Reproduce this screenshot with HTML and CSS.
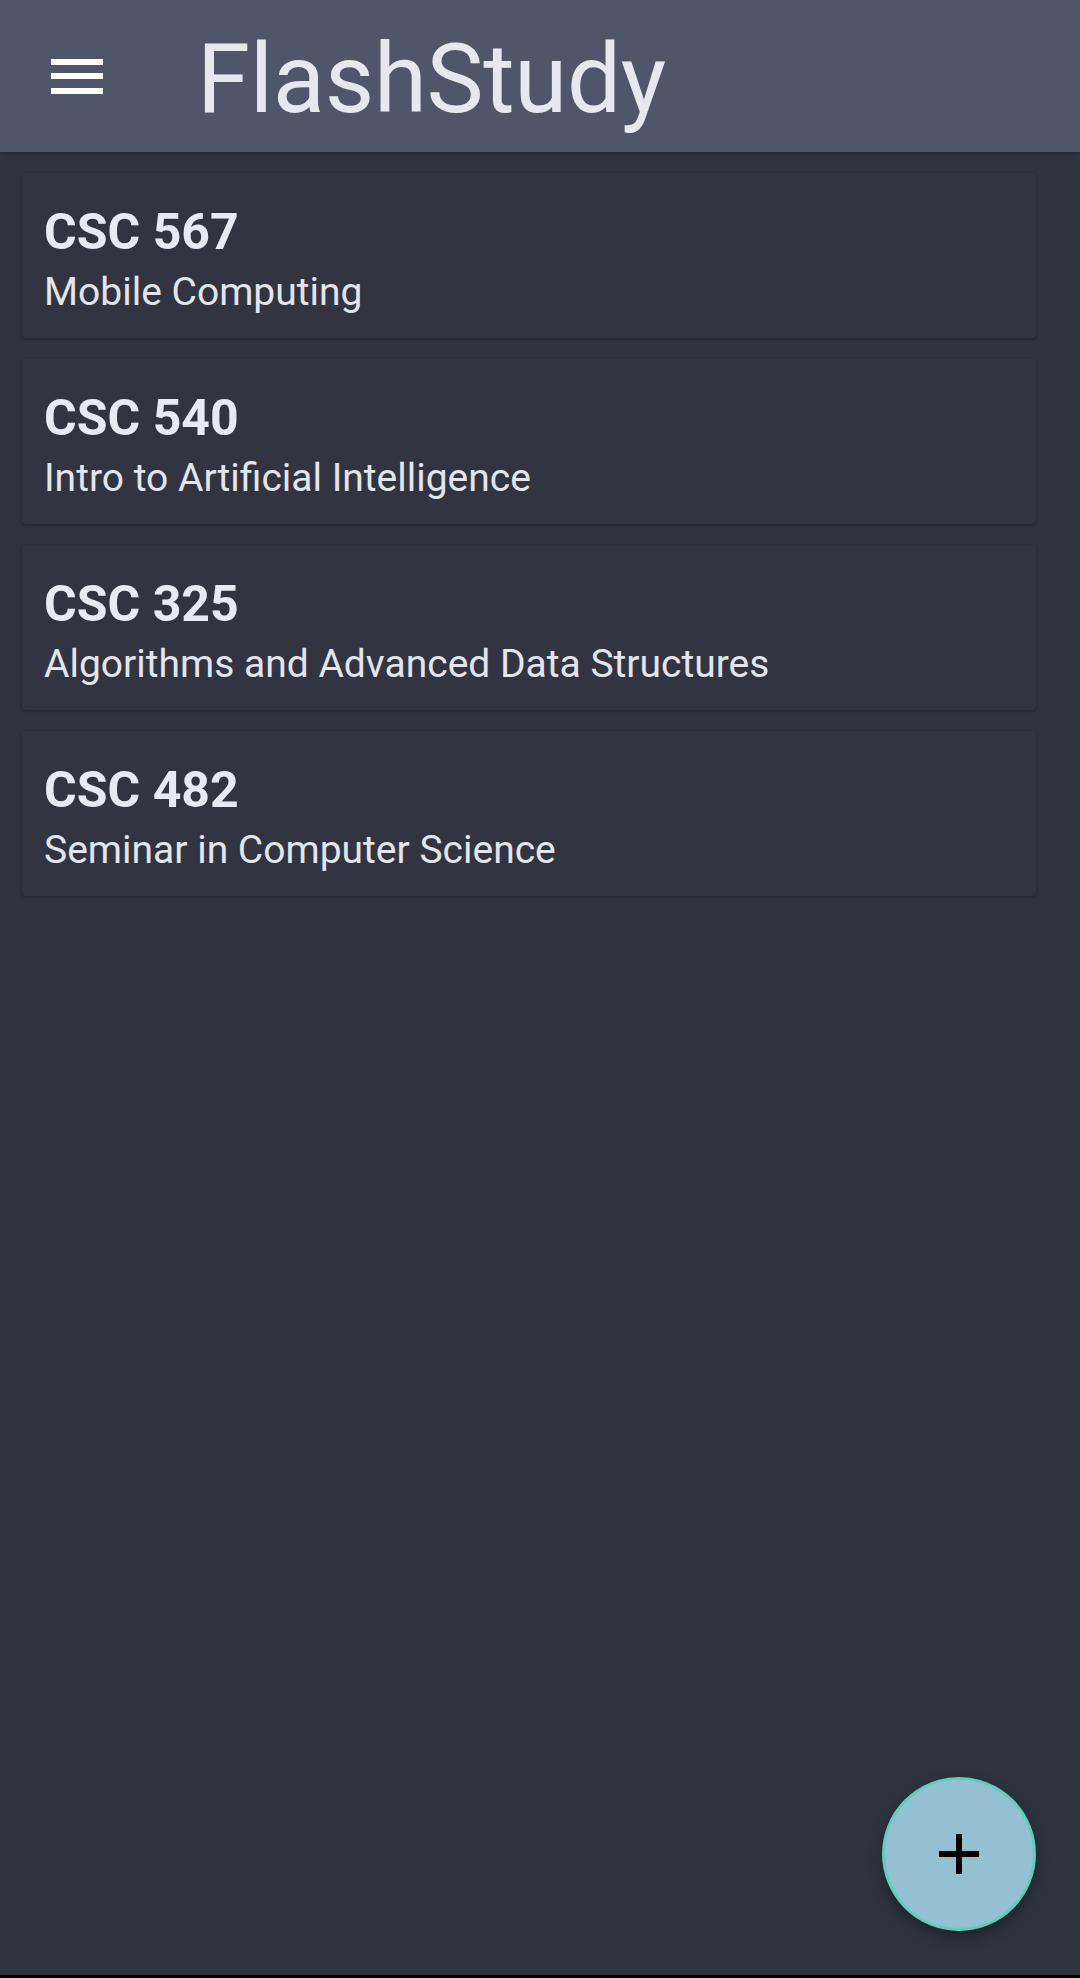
FILE: index.html
```html
<!DOCTYPE html>
<html lang="en">
<head>
<meta charset="utf-8">
<title>FlashStudy</title>
<link rel="stylesheet" href="styles.css">
</head>
<body>
<div class="app">
  <header class="appbar">
    <button class="menu-btn" aria-label="Menu">
      <span class="bar"></span><span class="bar"></span><span class="bar"></span>
    </button>
    <h1 class="app-title">FlashStudy</h1>
  </header>
  <main class="course-list">
    <div class="card">
      <div class="code">CSC 567</div>
      <div class="name">Mobile Computing</div>
    </div>
    <div class="card">
      <div class="code">CSC 540</div>
      <div class="name">Intro to Artificial Intelligence</div>
    </div>
    <div class="card">
      <div class="code">CSC 325</div>
      <div class="name">Algorithms and Advanced Data Structures</div>
    </div>
    <div class="card">
      <div class="code">CSC 482</div>
      <div class="name">Seminar in Computer Science</div>
    </div>
    <button class="fab" aria-label="Add">
      <svg width="40" height="40" viewBox="0 0 40 40"><path d="M20 0v40M0 20h40" stroke="#000" stroke-width="6" fill="none"/></svg>
    </button>
  </main>
  <div class="navline"></div>
</div>
</body>
</html>
```
FILE: styles.css
```css
html, body {
  margin: 0;
  padding: 0;
  background: #2f3340;
}
.app {
  width: 1080px;
  height: 1978px;
  display: flex;
  flex-direction: column;
  font-family: Roboto, "Liberation Sans", sans-serif;
  color: #e6e8f0;
}
.appbar {
  height: 152px;
  flex: none;
  background: #4f5669;
  display: flex;
  align-items: center;
  box-shadow: 0 2px 4px rgba(0,0,0,0.25);
  position: relative;
  z-index: 1;
}
.menu-btn {
  margin-left: 51px;
  width: 52px;
  height: 35px;
  padding: 0;
  border: 0;
  background: none;
  display: flex;
  flex-direction: column;
  justify-content: space-between;
}
.bar {
  display: block;
  height: 6px;
  background: #ffffff;
}
.app-title {
  margin: 0 0 0 94px;
  font-weight: 400;
  font-size: 96px;
  line-height: 1;
  color: #e6e8f0;
  letter-spacing: -0.3px;
  position: relative;
  top: 3px;
}
.course-list {
  flex: 1;
  position: relative;
  padding: 21px 44px 0 22px;
  display: flex;
  flex-direction: column;
  gap: 21px;
}
.card {
  height: 165px;
  box-sizing: border-box;
  background: #323541;
  border-radius: 4px;
  box-shadow: 0 1px 3px rgba(0,0,0,0.3);
  padding: 30px 22px 0 22px;
}
.code {
  font-weight: 700;
  font-size: 50px;
  line-height: 59px;
  color: #e8e9f2;
}
.name {
  margin-top: 7px;
  font-size: 39px;
  line-height: 47px;
  color: #e3e5ee;
}
.fab {
  position: absolute;
  left: 882px;
  top: 1625px;
  width: 154px;
  height: 154px;
  border-radius: 50%;
  background: #95c0d1;
  border: 3px solid #5ccfb8;
  box-sizing: border-box;
  box-shadow: 0 6px 14px rgba(0,0,0,0.35);
  display: flex;
  align-items: center;
  justify-content: center;
  padding: 0;
}
.navline {
  height: 3px;
  background: #000;
  flex: none;
}
```
